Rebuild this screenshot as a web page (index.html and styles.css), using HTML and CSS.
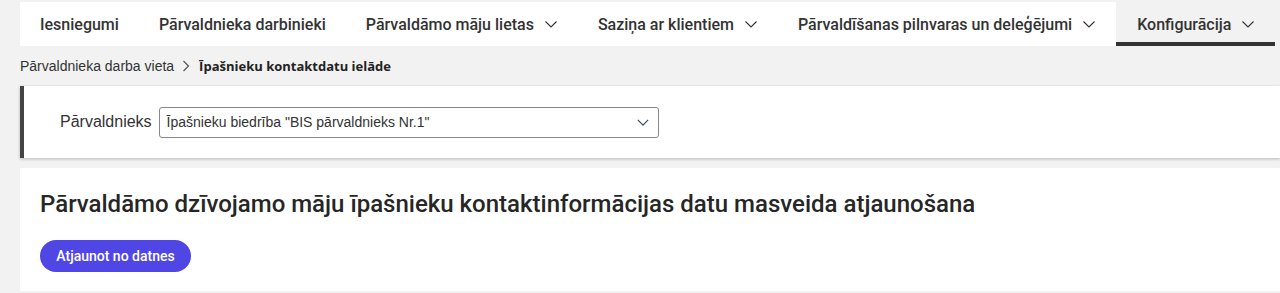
FILE: index.html
```html
<!DOCTYPE html>
<html lang="lv">
<head>
<meta charset="utf-8">
<title>Īpašnieku kontaktdatu ielāde</title>
<link rel="stylesheet" href="styles.css">
</head>
<body>
<nav class="nav">
  <a class="tab">Iesniegumi</a>
  <a class="tab">Pārvaldnieka darbinieki</a>
  <a class="tab">Pārvaldāmo māju lietas <svg class="chev" viewBox="0 0 14 8"><path d="M1.5 1.5l5.5 5.5 5.5-5.5" fill="none" stroke="#333" stroke-width="1.1"/></svg></a>
  <a class="tab">Saziņa ar klientiem <svg class="chev" viewBox="0 0 14 8"><path d="M1.5 1.5l5.5 5.5 5.5-5.5" fill="none" stroke="#333" stroke-width="1.1"/></svg></a>
  <a class="tab">Pārvaldīšanas pilnvaras un deleģējumi <svg class="chev" viewBox="0 0 14 8"><path d="M1.5 1.5l5.5 5.5 5.5-5.5" fill="none" stroke="#333" stroke-width="1.1"/></svg></a>
  <a class="tab active">Konfigurācija <svg class="chev" viewBox="0 0 14 8"><path d="M1.5 1.5l5.5 5.5 5.5-5.5" fill="none" stroke="#333" stroke-width="1.1"/></svg></a>
</nav>
<div class="crumbs">
  <span>Pārvaldnieka darba vieta</span>
  <svg class="crumb-sep" viewBox="0 0 8 12"><path d="M1.5 1l5 5-5 5" fill="none" stroke="#555" stroke-width="1.2"/></svg>
  <strong>Īpašnieku kontaktdatu ielāde</strong>
</div>
<section class="filter">
  <label class="flabel">Pārvaldnieks</label>
  <div class="select">
    <span>Īpašnieku biedrība "BIS pārvaldnieks Nr.1"</span>
    <svg class="sel-chev" viewBox="0 0 14 8"><path d="M1 1l6 6 6-6" fill="none" stroke="#3a4a5a" stroke-width="1.4"/></svg>
  </div>
</section>
<section class="card">
  <h1 class="title">Pārvaldāmo dzīvojamo māju īpašnieku kontaktinformācijas datu masveida atjaunošana</h1>
  <button class="btn">Atjaunot no datnes</button>
</section>
</body>
</html>
```
FILE: styles.css
```css
html, body {
  margin: 0;
  padding: 0;
}
body {
  background: #f2f2f2;
  font-family: Roboto, "Liberation Sans", Arial, sans-serif;
  color: #333;
  overflow: hidden;
}
.nav {
  display: flex;
  margin: 2px 5px 0 20px;
  height: 44px;
  background: #fff;
}
.tab {
  display: flex;
  align-items: center;
  gap: 10px;
  padding: 0 20px;
  font-size: 16px;
  font-weight: 500;
  color: #333;
  white-space: nowrap;
  box-sizing: border-box;
  height: 44px;
}
.tab.active {
  background: #f2f2f2;
  border-bottom: 4px solid #333;
  padding-top: 4px;
  padding-left: 21px;
  flex: 1;
}
.chev {
  width: 14px;
  height: 8px;
}
.crumbs {
  display: flex;
  align-items: center;
  height: 40px;
  padding-left: 20px;
  font-size: 14px;
  font-family: "Liberation Sans", Arial, sans-serif;
  color: #333;
}
.crumb-sep {
  width: 8px;
  height: 12px;
  margin: 0 9px 0 8px;
}
.crumbs strong {
  font-family: "Open Sans", sans-serif;
  font-weight: 700;
  font-size: 13px;
  color: #222;
}
.filter {
  display: flex;
  align-items: center;
  margin-left: 20px;
  height: 72px;
  background: #fff;
  border-left: 4px solid #444;
  box-shadow: 0 1px 3px rgba(0,0,0,0.25);
  padding-left: 36px;
  gap: 7px;
}
.flabel {
  font-family: "Liberation Sans", Arial, sans-serif;
  font-size: 16px;
  color: #333;
}
.select {
  display: flex;
  align-items: center;
  justify-content: space-between;
  width: 500px;
  height: 31px;
  box-sizing: border-box;
  border: 1px solid #888;
  border-radius: 3px;
  padding: 0 9px 0 7px;
  font-family: "Liberation Sans", Arial, sans-serif;
  font-size: 14px;
  color: #333;
}
.sel-chev {
  width: 12px;
  height: 7px;
}
.card {
  margin: 10px 0 0 20px;
  height: 123px;
  background: #fff;
  padding: 20px 20px 0;
  box-sizing: border-box;
}
.title {
  margin: 0;
  font-size: 24px;
  font-weight: 500;
  color: #262626;
  line-height: 32px;
}
.btn {
  margin-top: 20px;
  height: 32px;
  width: 151px;
  border: 0;
  border-radius: 16px;
  background: #5046e5;
  color: #fff;
  font-family: Roboto, sans-serif;
  font-size: 14px;
  font-weight: 500;
  padding: 0;
}
```
